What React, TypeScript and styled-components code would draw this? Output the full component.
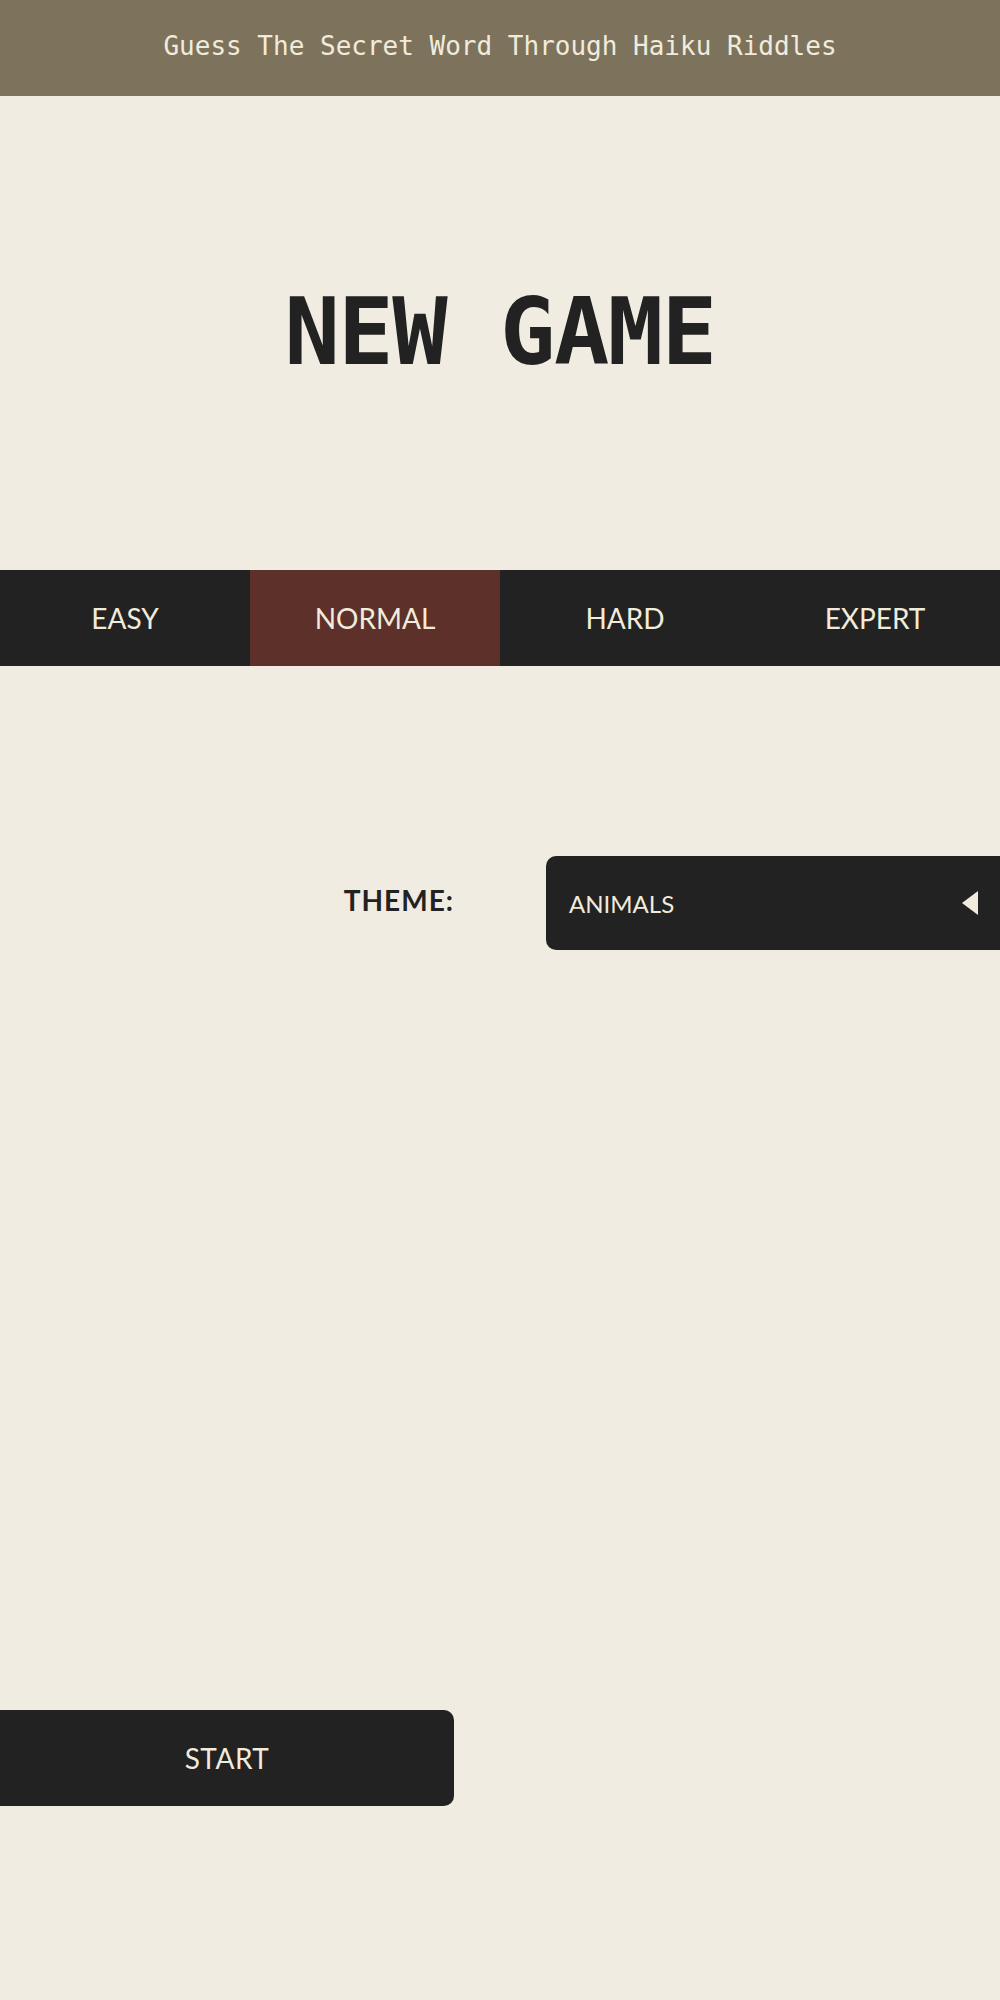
import React, { useState } from "react";
import styled, { createGlobalStyle } from "styled-components";

const GlobalStyle = createGlobalStyle`
  html, body {
    margin: 0;
    padding: 0;
    background: #f0ece1;
    overflow-x: hidden;
  }
  * { box-sizing: border-box; }
`;

const Page = styled.div`
  width: 100%;
  min-height: 2000px;
  background: #f0ece1;
  display: flex;
  flex-direction: column;
  overflow: hidden;
`;

const Header = styled.header`
  height: 96px;
  background: #7d735d;
  display: flex;
  align-items: center;
  justify-content: center;
  padding-bottom: 4px;
`;

const Tagline = styled.h2`
  margin: 0;
  font-family: "DejaVu Sans Mono", monospace;
  font-weight: 400;
  font-size: 26px;
  color: #f1ebdc;
`;

const TitleSection = styled.section`
  height: 474px;
  display: flex;
  align-items: center;
  justify-content: center;
`;

const Title = styled.h1`
  margin: 0;
  font-family: "DejaVu Sans Mono", monospace;
  font-weight: 700;
  font-size: 92px;
  letter-spacing: -1.5px;
  line-height: 1;
  color: #222222;
`;

const Tabs = styled.nav`
  display: grid;
  grid-template-columns: repeat(4, 1fr);
  height: 96px;
  background: #222222;
`;

const Tab = styled.button<{ $active: boolean }>`
  border: none;
  margin: 0;
  padding: 0;
  background: ${(p) => (p.$active ? "#5d3029" : "#222222")};
  color: #f1ebdc;
  font-family: Lato, "Liberation Sans", sans-serif;
  font-size: 28px;
  font-weight: 400;
  cursor: pointer;
`;

const ThemeRow = styled.div`
  margin-top: 190px;
  display: grid;
  grid-template-columns: 1fr 1fr;
  column-gap: 92px;
  align-items: center;
  height: 94px;
`;

const ThemeLabel = styled.label`
  justify-self: end;
  font-family: Lato, "Liberation Sans", sans-serif;
  font-weight: 700;
  font-size: 28px;
  letter-spacing: 1px;
  color: #222222;
  padding-bottom: 6px;
`;

const Select = styled.div`
  width: calc(100% + 40px);
  height: 94px;
  background: #222222;
  border-radius: 10px;
  display: flex;
  align-items: center;
  padding-left: 23px;
  padding-right: 62px;
  justify-content: space-between;
`;

const SelectValue = styled.span`
  font-family: Lato, "Liberation Sans", sans-serif;
  font-size: 24px;
  color: #f1ebdc;
`;

const Arrow = styled.svg`
  width: 16px;
  height: 24px;
  display: block;
`;

const StartRow = styled.div`
  margin-top: 760px;
  display: grid;
  grid-template-columns: 1fr 1fr;
  column-gap: 92px;
`;

const StartButton = styled.button`
  margin-left: -40px;
  width: calc(100% + 40px);
  height: 96px;
  border: none;
  border-radius: 10px;
  background: #222222;
  color: #f1ebdc;
  font-family: Lato, "Liberation Sans", sans-serif;
  font-size: 28px;
  letter-spacing: 0.5px;
  padding-left: 46px;
  cursor: pointer;
`;

const levels = ["EASY", "NORMAL", "HARD", "EXPERT"];

export default function App() {
  const [level, setLevel] = useState("NORMAL");
  return (
    <>
      <GlobalStyle />
      <Page>
        <Header>
          <Tagline>Guess The Secret Word Through Haiku Riddles</Tagline>
        </Header>
        <TitleSection>
          <Title>NEW GAME</Title>
        </TitleSection>
        <Tabs>
          {levels.map((l) => (
            <Tab key={l} $active={l === level} onClick={() => setLevel(l)}>
              {l}
            </Tab>
          ))}
        </Tabs>
        <ThemeRow>
          <ThemeLabel>THEME:</ThemeLabel>
          <Select>
            <SelectValue>ANIMALS</SelectValue>
            <Arrow viewBox="0 0 16 24">
              <polygon points="16,0 16,24 0,12" fill="#f1ebdc" />
            </Arrow>
          </Select>
        </ThemeRow>
        <StartRow>
          <StartButton>START</StartButton>
        </StartRow>
      </Page>
    </>
  );
}
